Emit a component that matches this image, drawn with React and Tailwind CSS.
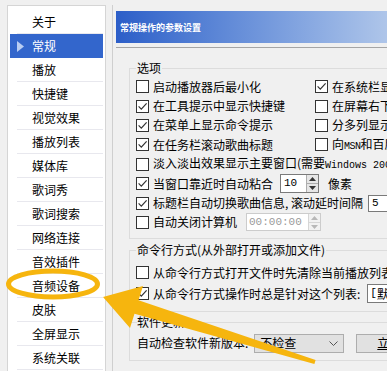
import React from "react";

function Box({ checked }) {
  return (
    <span className="w-[13px] h-[13px] border border-[#333333] bg-white shrink-0 flex items-center justify-center">
      {checked && (
        <svg width="11" height="11" viewBox="0 0 11 11">
          <path d="M1.6 5.4 L4.3 8.2 L9.6 2.3" fill="none" stroke="#333333" strokeWidth="1.2" />
        </svg>
      )}
    </span>
  );
}

function Check({ checked, children, className }) {
  return (
    <div className={"flex items-center gap-[4px] whitespace-nowrap shrink-0 " + (className || "")}>
      <Box checked={checked} />
      <span className="leading-none">{children}</span>
    </div>
  );
}

function SpinArrows({ disabled }) {
  const c = disabled ? "#b8b8b8" : "#333333";
  return (
    <div className={"w-[12px] self-stretch flex flex-col border-l " + (disabled ? "border-[#d6d6d6] bg-[#f2f2f2]" : "border-[#adadad] bg-[#e6e6e6]")}>
      <div className="flex-1 flex items-center justify-center">
        <svg width="7" height="4" viewBox="0 0 7 4"><polygon points="3.5,0 7,4 0,4" fill={c} /></svg>
      </div>
      <div className={"h-px " + (disabled ? "bg-[#d6d6d6]" : "bg-[#adadad]")} />
      <div className="flex-1 flex items-center justify-center">
        <svg width="7" height="4" viewBox="0 0 7 4"><polygon points="0,0 7,0 3.5,4" fill={c} /></svg>
      </div>
    </div>
  );
}

const items = [
  "关于",
  "常规",
  "播放",
  "快捷键",
  "视觉效果",
  "播放列表",
  "媒体库",
  "歌词秀",
  "歌词搜索",
  "网络连接",
  "音效插件",
  "音频设备",
  "皮肤",
  "全屏显示",
  "系统关联",
];

export default function App() {
  return (
    <div className="w-[387px] h-[371px] overflow-hidden relative bg-[#f0f0f0] flex pt-[5px] pl-[7px] text-[12px] text-black font-['Noto_Sans_CJK_SC',sans-serif] leading-none">
      {/* left list */}
      <div className="w-[99px] h-[380px] shrink-0 border border-[#d5d5d5] bg-white pt-[4px]">
        {items.map((t, i) =>
          i === 1 ? (
            <div key={t} className="h-[24px] ml-[2px] mr-[2px] bg-[#3366cc] flex items-center text-white">
              <svg className="ml-[7px] mr-[8px]" width="7" height="11" viewBox="0 0 7 11">
                <polygon points="0,0 7,5.5 0,11" fill="#b9cdf2" />
              </svg>
              <span>{t}</span>
            </div>
          ) : (
            <div key={t} className="h-[24px] ml-[9px] mr-[2px] border-b border-[#e8e8ee] pl-[15px] flex items-center">
              <span>{t}</span>
            </div>
          )
        )}
      </div>

      {/* right panel */}
      <div className="ml-[6px] w-[300px] shrink-0 border-l border-[#cfcfcf] pl-[3px] pt-[6px] flex flex-col">
        <div className="h-[32px] w-[300px] bg-gradient-to-r from-[#2c5ec8] to-[#bdd0ec] flex items-center pl-[4px]">
          <span className="text-[9px] text-white font-bold">常规操作的参数设置</span>
        </div>
        <div className="mt-[4px] h-px w-[300px] bg-[#a5a5a5]" />

        {/* 选项 */}
        <fieldset className="mt-[12px] ml-[13px] w-[300px] border border-[#dcdcdc] pl-[6px] pb-[6px] min-w-0">
          <legend className="px-[1px] leading-[16px]">选项</legend>
          <div className="pt-[1px] flex flex-col">
            <div className="h-[19.4px] flex items-center">
              <Check className="w-[179px]">启动播放器后最小化</Check>
              <Check checked>在系统栏显示图标</Check>
            </div>
            <div className="h-[19.4px] flex items-center">
              <Check checked className="w-[179px]">在工具提示中显示快捷键</Check>
              <Check>在屏幕右下角显示</Check>
            </div>
            <div className="h-[19.4px] flex items-center">
              <Check checked className="w-[179px]">在菜单上显示命令提示</Check>
              <Check>分多列显示菜单</Check>
            </div>
            <div className="h-[19.4px] flex items-center">
              <Check checked className="w-[179px]">在任务栏滚动歌曲标题</Check>
              <Check>
                向<span className="font-['Liberation_Mono',monospace] text-[10px] tracking-[-0.5px]">MSN</span>和百度Hi
              </Check>
            </div>
            <div className="h-[19.4px] flex items-center">
              <Check>
                淡入淡出效果显示主要窗口(需要
                <span className="font-['Liberation_Mono',monospace] text-[10px]">Windows 2000/XP)</span>
              </Check>
            </div>
            <div className="h-[19.4px] flex items-center whitespace-nowrap">
              <Check checked>当窗口靠近时自动粘合</Check>
              <div className="ml-[7px] w-[39px] h-[19px] shrink-0 border border-[#7a7a7a] bg-white flex items-stretch">
                <span className="flex-1 pl-[3px] flex items-center font-['Liberation_Mono',monospace] text-[11px]">10</span>
                <SpinArrows />
              </div>
              <span className="ml-[9px] shrink-0">像素</span>
            </div>
            <div className="h-[19.4px] flex items-center whitespace-nowrap">
              <Check checked>标题栏自动切换歌曲信息, 滚动延时间隔</Check>
              <div className="ml-[5px] w-[40px] h-[17px] shrink-0 border border-[#7a7a7a] bg-white pl-[3px] flex items-center font-['Liberation_Mono',monospace] text-[11px]">5</div>
            </div>
            <div className="h-[19.4px] flex items-center whitespace-nowrap">
              <Check>自动关闭计算机</Check>
              <div className="ml-[9px] w-[75px] h-[18px] shrink-0 border border-[#cccccc] bg-white flex items-stretch">
                <span className="flex-1 pl-[2px] flex items-center font-['Liberation_Mono',monospace] text-[11px] text-[#9a9a9a]">00:00:00</span>
                <SpinArrows disabled />
              </div>
            </div>
          </div>
        </fieldset>

        {/* 命令行方式 */}
        <fieldset className="mt-[3px] ml-[13px] w-[300px] border border-[#dcdcdc] pl-[6px] pb-[7px] min-w-0">
          <legend className="px-[1px] leading-[16px]">命令行方式(从外部打开或添加文件)</legend>
          <div className="pt-[4px] flex flex-col">
            <div className="h-[21px] flex items-center">
              <Check>从命令行方式打开文件时先清除当前播放列表</Check>
            </div>
            <div className="h-[21px] flex items-center whitespace-nowrap">
              <Check checked>从命令行方式操作时总是针对这个列表:</Check>
              <div className="ml-[7px] w-[60px] h-[19px] shrink-0 border border-[#7a7a7a] bg-white pl-[2px] flex items-center">
                <span className="font-['Liberation_Mono',monospace] text-[11px]">[</span>默认列表]
              </div>
            </div>
          </div>
        </fieldset>

        {/* 软件更新 */}
        <fieldset className="mt-[2px] ml-[13px] w-[300px] border border-[#dcdcdc] pl-[7px] pb-[7px] min-w-0">
          <legend className="px-[0px] leading-[16px]">软件更新</legend>
          <div className="pt-[3px] h-[23px] flex items-center whitespace-nowrap">
            <span className="shrink-0">自动检查软件新版本:</span>
            <div className="ml-[6px] w-[90px] h-[19px] shrink-0 border border-[#adadad] bg-[#e1e1e1] flex items-center pl-[5px] pr-[5px]">
              <span className="flex-1">不检查</span>
              <svg width="9" height="5" viewBox="0 0 9 5">
                <path d="M0.5 0.5 L4.5 4.5 L8.5 0.5" fill="none" stroke="#555555" strokeWidth="1" />
              </svg>
            </div>
            <div className="ml-[12px] w-[90px] h-[19px] shrink-0 border border-[#adadad] bg-[#e1e1e1] flex items-center justify-center">
              <span className="underline">立即检查</span>
            </div>
          </div>
        </fieldset>
      </div>

      {/* annotation overlay */}
      <svg className="absolute left-0 top-0 pointer-events-none" width="387" height="371" viewBox="0 0 387 371">
        <ellipse cx="53" cy="284" rx="44.5" ry="13" fill="none" stroke="#f6b50e" strokeWidth="5" />
        <polygon
          points="103,297 143,286 138.5,300.3 315.6,360 314.4,364 134.5,313.7 130,328"
          fill="#f6b50e"
        />
      </svg>
    </div>
  );
}
